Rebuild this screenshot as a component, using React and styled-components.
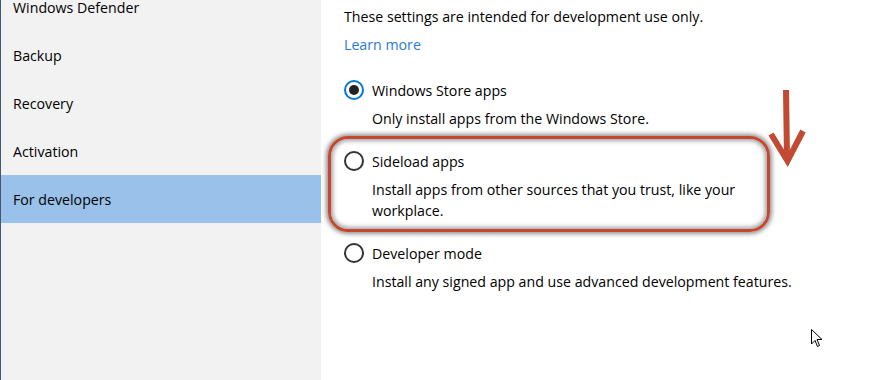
import React from "react";
import styled, { createGlobalStyle } from "styled-components";

const Global = createGlobalStyle`
  html, body { margin: 0; padding: 0; background: #fff; }
  body { width: 890px; height: 380px; overflow: hidden; font-family: "Open Sans", "Noto Sans", sans-serif; }
`;

const Window = styled.div`
  position: relative;
  display: flex;
  width: 890px;
  height: 380px;
  overflow: hidden;
  background: #fff;
`;

const Sidebar = styled.nav`
  width: 320px;
  flex: 0 0 320px;
  background: #f2f2f2;
  border-left: 1px solid #45586b;
  display: flex;
  flex-direction: column;
  margin-top: -17px;
  height: calc(100% + 17px);
`;

const NavItem = styled.div`
  height: 48px;
  display: flex;
  align-items: center;
  padding-left: 12px;
  font-size: 14.2px;
  color: #000;
  background: ${(p) => (p.$active ? "#99c1e9" : "transparent")};
`;

const Main = styled.main`
  flex: 1;
  padding: 6px 0 0 23px;
  display: flex;
  flex-direction: column;
  color: #000;
  font-size: 14.2px;
`;

const Intro = styled.p`
  margin: 0;
  line-height: 21px;
  font-size: 14.2px;
`;

const LearnLink = styled.a`
  margin-top: 7px;
  line-height: 21px;
  color: #2a7bd3;
  text-decoration: none;
  font-size: 14.2px;
`;

const Options = styled.div`
  display: flex;
  flex-direction: column;
  margin-top: 25px;
`;

const Option = styled.div`
  position: relative;
  display: flex;
  flex-direction: column;
  margin-bottom: 22px;

  ${(p) =>
    p.$highlight &&
    `
    &::before {
      content: "";
      position: absolute;
      left: -16px;
      top: -15px;
      width: 436px;
      height: 90px;
      border: 3px solid #c4482f;
      border-radius: 20px;
      box-shadow: 0 0 4px 2px rgba(100,100,100,0.7), inset 0 0 4px 2px rgba(100,100,100,0.6);
      pointer-events: none;
    }
  `}
`;

const RadioRow = styled.label`
  display: flex;
  align-items: center;
  gap: 8px;
  height: 20px;
  font-size: 14.2px;
`;

const Radio = styled.span`
  box-sizing: border-box;
  width: 20px;
  height: 20px;
  border-radius: 50%;
  border: 2px solid ${(p) => (p.$checked ? "#0078d7" : "#333")};
  display: flex;
  align-items: center;
  justify-content: center;
  &::after {
    content: "";
    display: ${(p) => (p.$checked ? "block" : "none")};
    width: 10px;
    height: 10px;
    border-radius: 50%;
    background: #222;
  }
`;

const Desc = styled.p`
  margin: 8px 0 0 28px;
  line-height: 21px;
  font-size: 14.2px;
  width: ${(p) => p.$width || 400}px;
`;

const Overlay = styled.svg`
  position: absolute;
  pointer-events: none;
`;

export default function App() {
  const nav = ["Windows Defender", "Backup", "Recovery", "Activation", "For developers"];
  return (
    <>
      <Global />
      <Window>
        <Sidebar>
          {nav.map((n) => (
            <NavItem key={n} $active={n === "For developers"}>
              {n}
            </NavItem>
          ))}
        </Sidebar>
        <Main>
          <Intro>These settings are intended for development use only.</Intro>
          <LearnLink href="#">Learn more</LearnLink>
          <Options>
            <Option>
              <RadioRow>
                <Radio $checked />
                Windows Store apps
              </RadioRow>
              <Desc>Only install apps from the Windows Store.</Desc>
            </Option>
            <Option $highlight>
              <RadioRow>
                <Radio />
                Sideload apps
              </RadioRow>
              <Desc>Install apps from other sources that you trust, like your workplace.</Desc>
            </Option>
            <Option>
              <RadioRow>
                <Radio />
                Developer mode
              </RadioRow>
              <Desc $width={470}>Install any signed app and use advanced development features.</Desc>
            </Option>
          </Options>
        </Main>
        <Overlay style={{ left: 766, top: 86 }} width="42" height="82" viewBox="0 0 42 82">
          <path d="M20 4 L21 72" stroke="#c24a33" strokeWidth="6" fill="none" />
          <path d="M5 48 L21.5 75 L37 45" stroke="#c24a33" strokeWidth="6" fill="none" strokeLinejoin="miter" />
        </Overlay>
        <Overlay style={{ left: 810, top: 328 }} width="14" height="22" viewBox="0 0 14 22">
          <path d="M1.5 1.5 L1.5 16 L5 12.5 L7.5 18.5 L9.5 17.5 L7 11.5 L12 11.5 Z" fill="#fff" stroke="#000" strokeWidth="1" strokeLinejoin="round" />
        </Overlay>
      </Window>
    </>
  );
}
